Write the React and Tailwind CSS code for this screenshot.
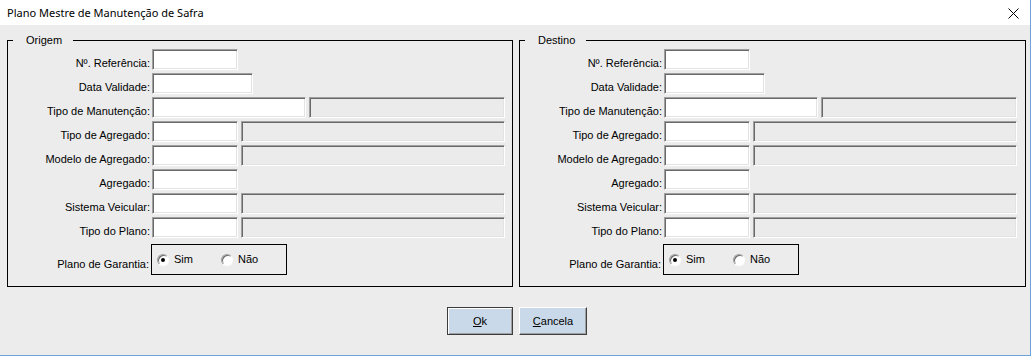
import React from 'react';

const sunken =
  'border border-[#a0a0a0] border-r-white border-b-white shadow-[inset_1px_1px_0_#696969,inset_-1px_-1px_0_#e3e3e3]';

const Field = ({ label, w, second }) => (
  <div className="flex h-[21px]">
    <div className="w-[144px] pr-[2px] pt-[8px] text-right leading-[13px] whitespace-nowrap">
      {label}
    </div>
    <div className={`${w} h-full bg-white ${sunken}`} />
    {second && <div className={`${second} ml-[3px] h-full bg-[#ebebeb] ${sunken}`} />}
  </div>
);

const Radio = ({ label, checked, className }) => (
  <div className={`flex items-center ${className || ''}`}>
    <div className="w-[12px] h-[12px] rounded-full bg-white border border-[#a0a0a0] border-r-white border-b-white shadow-[inset_1px_1px_0_#696969] flex items-center justify-center">
      {checked && <div className="w-[4px] h-[4px] rounded-full bg-black" />}
    </div>
    <span className="ml-[5px] leading-[13px]">{label}</span>
  </div>
);

const Group = ({ title, width }) => (
  <fieldset className={`${width} border border-black pt-[2px] pb-[11px] px-0 m-0`}>
    <legend className="ml-[5px] pl-[13px] pr-[11px] leading-[13px]">{title}</legend>
    <div className="flex flex-col gap-[3px]">
      <Field label="Nº. Referência:" w="w-[86px]" />
      <Field label="Data Validade:" w="w-[101px]" />
      <Field label="Tipo de Manutenção:" w="w-[154px]" second="w-[196px]" />
      <Field label="Tipo de Agregado:" w="w-[86px]" second="w-[264px]" />
      <Field label="Modelo de Agregado:" w="w-[86px]" second="w-[264px]" />
      <Field label="Agregado:" w="w-[86px]" />
      <Field label="Sistema Veicular:" w="w-[86px]" second="w-[264px]" />
      <Field label="Tipo do Plano:" w="w-[86px]" second="w-[264px]" />
    </div>
    <div className="flex mt-[6px] h-[31px]">
      <div className="w-[143px] pr-[2px] text-right flex items-center justify-end pt-[10px]">
        Plano de Garantia:
      </div>
      <div className="w-[136px] h-full border border-black flex items-center pl-[5px]">
        <Radio label="Sim" checked />
        <Radio label="Não" className="ml-[28px]" />
      </div>
    </div>
  </fieldset>
);

const App = () => {
  return (
    <div className="w-[1031px] h-[356px] bg-[#ececec] border-r border-b border-[#6fa3d8] flex flex-col text-[11px] text-black font-['Liberation_Sans',Arial,sans-serif] overflow-hidden">
      <div className="h-[25px] bg-white flex items-center justify-between pl-[7px] pr-[11px] shrink-0">
        <span className="text-[11px] font-['Noto_Sans',sans-serif] leading-none">
          Plano Mestre de Manutenção de Safra
        </span>
        <svg width="11" height="11" viewBox="0 0 11 11" className="mt-[1px]">
          <path d="M0.5 0.5 L10.5 10.5 M10.5 0.5 L0.5 10.5" stroke="#000" strokeWidth="1" />
        </svg>
      </div>

      <div className="flex gap-[6px] pl-[7px] pt-[9px]">
        <Group title="Origem" width="w-[506px]" />
        <Group title="Destino" width="w-[507px]" />
      </div>

      <div className="flex justify-center gap-[6px] mt-[20px] pl-[4px]">
        <button className="w-[66px] h-[28px] bg-[#c9d9e9] border border-[#3c3c3c] shadow-[inset_1px_1px_0_#fff,inset_-1px_-1px_0_#a0a0a0]">
          <span className="underline">O</span>k
        </button>
        <button className="w-[68px] h-[28px] bg-[#c9d9e9] border border-white border-r-[#404040] border-b-[#404040] shadow-[inset_-1px_-1px_0_#a0a0a0]">
          <span className="underline">C</span>ancela
        </button>
      </div>
    </div>
  );
};

export default App;
